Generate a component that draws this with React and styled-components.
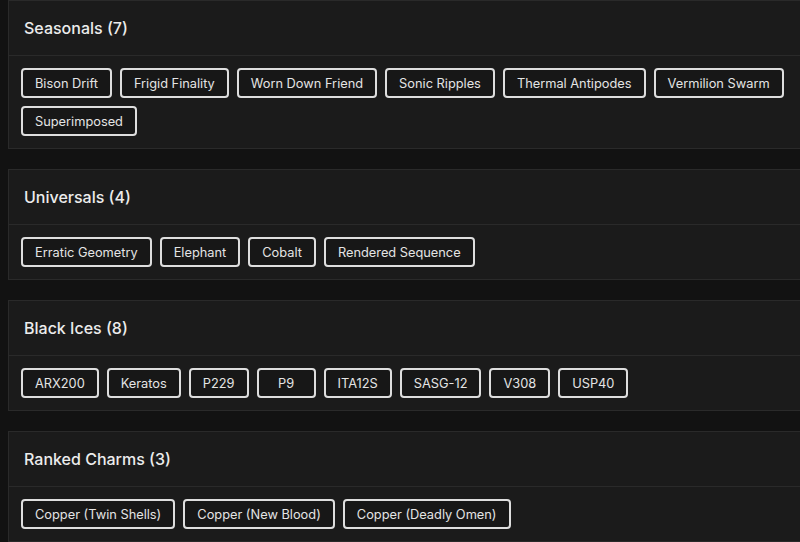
import React from "react";
import styled, { createGlobalStyle } from "styled-components";

const GlobalStyle = createGlobalStyle`
  html, body {
    margin: 0;
    padding: 0;
    background: #121212;
    overflow: hidden;
  }
  body {
    font-family: "Inter", "Noto Sans", sans-serif;
    color: #e8e8e8;
  }
`;

const Page = styled.div`
  display: flex;
  flex-direction: column;
  gap: 20px;
  padding-left: 8px;
  width: 840px;
`;

const Card = styled.section`
  background: #1b1b1b;
  border: 1px solid #2a2a2a;
`;

const Header = styled.div`
  height: 54px;
  display: flex;
  align-items: center;
  padding: 0 15px;
  border-bottom: 1px solid #2a2a2a;
`;

const Title = styled.h2`
  margin: 0;
  font-size: 16px;
  font-weight: 500;
  color: #ececec;
`;

const Chips = styled.div`
  display: flex;
  flex-wrap: wrap;
  gap: 8px;
  padding: 12px;
  max-width: 880px;
`;

const Chip = styled.button`
  height: 30px;
  min-width: 59px;
  padding: 0 12px;
  border: 2px solid #dedede;
  border-radius: 4px;
  background: #171717;
  color: #e4e4e4;
  font-family: inherit;
  font-size: 12.8px;
  cursor: pointer;
`;

const groups = [
  {
    name: "Seasonals",
    items: [
      "Bison Drift",
      "Frigid Finality",
      "Worn Down Friend",
      "Sonic Ripples",
      "Thermal Antipodes",
      "Vermilion Swarm",
      "Superimposed",
    ],
  },
  {
    name: "Universals",
    items: ["Erratic Geometry", "Elephant", "Cobalt", "Rendered Sequence"],
  },
  {
    name: "Black Ices",
    items: ["ARX200", "Keratos", "P229", "P9", "ITA12S", "SASG-12", "V308", "USP40"],
  },
  {
    name: "Ranked Charms",
    items: ["Copper (Twin Shells)", "Copper (New Blood)", "Copper (Deadly Omen)"],
  },
];

const App = () => {
  return (
    <>
      <GlobalStyle />
      <Page>
        {groups.map((g) => (
          <Card key={g.name}>
            <Header>
              <Title>
                {g.name} ({g.items.length})
              </Title>
            </Header>
            <Chips>
              {g.items.map((item) => (
                <Chip key={item}>{item}</Chip>
              ))}
            </Chips>
          </Card>
        ))}
      </Page>
    </>
  );
};

export default App;
